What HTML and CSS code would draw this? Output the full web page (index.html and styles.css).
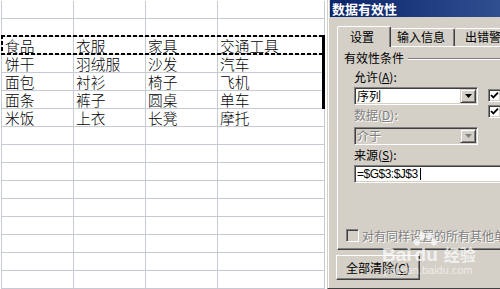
FILE: index.html
```html
<!DOCTYPE html>
<html>
<head>
<meta charset="utf-8">
<link rel="stylesheet" href="styles.css">
</head>
<body>
<div class="screen">
  <div class="sheet">
    <div class="row"><div class="c"></div><div class="c"></div><div class="c"></div><div class="c last"></div></div>
    <div class="row"><div class="c"></div><div class="c"></div><div class="c"></div><div class="c last"></div></div>
    <div class="row"><div class="c first">食品</div><div class="c">衣服</div><div class="c">家具</div><div class="c last">交通工具</div></div>
    <div class="row"><div class="c first">饼干</div><div class="c">羽绒服</div><div class="c">沙发</div><div class="c last">汽车</div></div>
    <div class="row"><div class="c first">面包</div><div class="c">衬衫</div><div class="c">椅子</div><div class="c last">飞机</div></div>
    <div class="row"><div class="c first">面条</div><div class="c">裤子</div><div class="c">圆桌</div><div class="c last">单车</div></div>
    <div class="row"><div class="c first">米饭</div><div class="c">上衣</div><div class="c">长凳</div><div class="c last">摩托</div></div>
    <div class="row"><div class="c"></div><div class="c"></div><div class="c"></div><div class="c last"></div></div>
    <div class="row"><div class="c"></div><div class="c"></div><div class="c"></div><div class="c last"></div></div>
    <div class="row"><div class="c"></div><div class="c"></div><div class="c"></div><div class="c last"></div></div>
    <div class="row"><div class="c"></div><div class="c"></div><div class="c"></div><div class="c last"></div></div>
    <div class="row"><div class="c"></div><div class="c"></div><div class="c"></div><div class="c last"></div></div>
    <div class="row"><div class="c"></div><div class="c"></div><div class="c"></div><div class="c last"></div></div>
    <div class="row"><div class="c"></div><div class="c"></div><div class="c"></div><div class="c last"></div></div>
    <div class="row"><div class="c"></div><div class="c"></div><div class="c"></div><div class="c last"></div></div>
    <div class="row"><div class="c"></div><div class="c"></div><div class="c"></div><div class="c last"></div></div>
    <div class="marquee"></div>
    <div class="selbar"></div>
  </div>

  <div class="dialog">
    <div class="title">数据有效性</div>
    <div class="tabs">
      <div class="tab active">设置</div>
      <div class="tab second">输入信息</div>
      <div class="tab third">出错警告</div>
    </div>
    <div class="page">
      <div class="group"><span>有效性条件</span><i class="etch"></i></div>
      <div class="fields">
        <div class="lbl r1">允许(<u>A</u>):</div>
        <div class="combo r2"><span>序列</span><b class="dd"><svg width="7" height="4" viewBox="0 0 7 4"><path d="M0 0H7L3.5 4Z" fill="#000"/></svg></b></div>
        <div class="chk chk1"><svg width="9" height="9" viewBox="0 0 9 9"><path d="M1 4L3.3 6.4L8 1.6" fill="none" stroke="#000" stroke-width="1.8"/></svg></div>
        <div class="lbl dis r3">数据(<u>D</u>):</div>
        <div class="chk chk2"><svg width="9" height="9" viewBox="0 0 9 9"><path d="M1 4L3.3 6.4L8 1.6" fill="none" stroke="#000" stroke-width="1.8"/></svg></div>
        <div class="combo off r4"><span>介于</span><b class="dd"><svg width="7" height="4" viewBox="0 0 7 4"><path d="M0 0H7L3.5 4Z" fill="#808080"/></svg></b></div>
      </div>
      <div class="lbl src">来源(<u>S</u>):</div>
      <div class="input"><span>=$G$3:$J$3</span><i class="caret"></i></div>
      <div class="apply"><span class="box"></span><span class="dis">对有同样设置的所有其他单元格应用这些更改</span></div>
    </div>
    <div class="foot"><button class="btn">全部清除(<u>C</u>)</button></div>
    <div class="wm">
      <div class="wm-logo"><span class="bai">Bai</span><span class="du"><svg class="paw" width="26" height="20" viewBox="0 0 26 20"><ellipse cx="5" cy="11" rx="3" ry="3.6"/><ellipse cx="10" cy="5" rx="3" ry="3.8"/><ellipse cx="17" cy="5" rx="3" ry="3.8"/><ellipse cx="22" cy="11" rx="3" ry="3.6"/></svg>du</span><span class="jy">经验</span></div>
      <div class="wm-url">jingyan.baidu.com</div>
    </div>
  </div>
</div>
</body>
</html>
```

FILE: styles.css
```css
* { box-sizing: border-box; }
html, body { margin: 0; padding: 0; background: #fff; }
.screen {
  width: 500px;
  height: 289px;
  overflow: hidden;
  display: flex;
  font-family: "Noto Sans CJK SC", sans-serif;
}

/* spreadsheet */
.sheet {
  position: relative;
  width: 327px;
  flex: none;
  padding: 1px 0 0 1px;
  background: #fff;
}
.row { display: flex; height: 18px; }
.c {
  width: 72px;
  height: 18px;
  border-left: 1px solid #c6cad2;
  border-bottom: 1px solid #c6cad2;
  padding-left: 2px;
  font-size: 14.7px;
  font-weight: 300;
  line-height: 17px;
  color: #000;
  white-space: nowrap;
}
.c.first { padding-left: 3px; }
.c.last { width: 108px; border-right: 1px solid #c6cad2; }
.marquee {
  position: absolute;
  left: 1px;
  top: 35px;
  width: 324px;
  height: 20px;
  background:
    repeating-linear-gradient(to right, #000 0 4px, transparent 4px 6px) top left / 100% 2px no-repeat,
    repeating-linear-gradient(to right, #000 0 4px, transparent 4px 6px) bottom left / 100% 2px no-repeat,
    repeating-linear-gradient(to bottom, #000 0 4px, transparent 4px 6px) top left / 2px 100% no-repeat,
    repeating-linear-gradient(to bottom, #000 0 4px, transparent 4px 6px) top right / 2px 100% no-repeat;
}
.selbar {
  position: absolute;
  left: 322px;
  top: 36px;
  width: 3px;
  height: 73px;
  background: #000;
}

/* dialog */
.dialog {
  position: relative;
  flex: 1;
  min-width: 0;
  height: 289px;
  overflow: hidden;
  background: #d4d0c8;
  border-left: 1px solid #d4d0c8;
  box-shadow: inset 1px 0 #ffffff;
  padding-left: 2px;
  border-bottom: 1px solid #404040;
}
.title {
  height: 17px;
  width: 220px;
  background: linear-gradient(to right, #0a246a, #3b5c9c);
  color: #fff;
  font-weight: bold;
  font-size: 13px;
  line-height: 17px;
  padding-left: 2px;
  white-space: nowrap;
}
.tabs {
  display: flex;
  align-items: flex-end;
  height: 20px;
  margin: 9px 0 0 7px;
  width: 240px;
  position: relative;
  z-index: 1;
}
.tab {
  height: 18px;
  border-top: 1px solid #fff;
  border-left: 1px solid #fff;
  border-right: 1px solid #404040;
  box-shadow: inset -1px 0 #808080;
  border-radius: 2px 2px 0 0;
  font-size: 12px;
  line-height: 15px;
  white-space: nowrap;
  color: #000;
}
.tab.active {
  width: 54px;
  height: 21px;
  margin-bottom: -1px;
  padding: 2px 0 0 12px;
  background: #d4d0c8;
}
.tab.second { width: 64px; padding-left: 6px; border-left: none; }
.tab.third { width: 70px; padding-left: 10px; border-left: none; }

.page {
  width: 240px;
  height: 204px;
  margin-left: 7px;
  border-top: 1px solid #fff;
  border-left: 1px solid #fff;
  border-bottom: 1px solid #404040;
  box-shadow: inset 0 -1px #808080;
  padding: 3px 0 7px 6px;
  display: flex;
  flex-direction: column;
  font-size: 12px;
  line-height: 15px;
  color: #000;
}
.group { display: flex; align-items: center; height: 15px; white-space: nowrap; }
.etch {
  flex: 1;
  height: 2px;
  margin-left: 4px;
  margin-top: 2px;
  border-top: 1px solid #808080;
  border-bottom: 1px solid #fff;
}
.fields {
  display: grid;
  grid-template-columns: 124px 13px;
  column-gap: 10px;
  margin-left: 10px;
  margin-top: 4px;
  align-items: start;
}
.lbl { height: 15px; white-space: nowrap; }
.lbl u { text-decoration: underline; }
.r1 { grid-column: 1; grid-row: 1; }
.r2 { grid-column: 1; grid-row: 2; margin-top: 3px; }
.r3 { grid-column: 1; grid-row: 3; margin-top: 2px; }
.r4 { grid-column: 1; grid-row: 4; margin-top: 5px; }
.dis { color: #808080; text-shadow: 1px 1px 0 #fff; }
.combo {
  position: relative;
  height: 18px;
  background: #fff;
  border-top: 1px solid #808080;
  border-left: 1px solid #808080;
  border-right: 1px solid #fff;
  border-bottom: 1px solid #fff;
  box-shadow: inset 1px 1px #404040, inset -1px -1px #d4d0c8;
  padding: 1px 0 0 2px;
  display: flex;
  justify-content: space-between;
  line-height: 14px;
  white-space: nowrap;
}
.combo.off { background: #d4d0c8; }
.combo.off span { color: #808080; text-shadow: 1px 1px 0 #fff; }
.dd {
  width: 16px;
  height: 14px;
  margin-right: 1px;
  background: #d4d0c8;
  border-top: 1px solid #d4d0c8;
  border-left: 1px solid #d4d0c8;
  border-right: 1px solid #404040;
  border-bottom: 1px solid #404040;
  box-shadow: inset 1px 1px #fff, inset -1px -1px #808080;
  display: flex;
  align-items: center;
  justify-content: center;
}
.chk {
  width: 13px;
  height: 13px;
  background: #fff;
  border-top: 1px solid #808080;
  border-left: 1px solid #808080;
  border-right: 1px solid #fff;
  border-bottom: 1px solid #fff;
  box-shadow: inset 1px 1px #404040, inset -1px -1px #d4d0c8;
  display: flex;
  align-items: center;
  justify-content: center;
}
.chk1 { grid-column: 2; grid-row: 2; margin-top: 5px; }
.chk2 { grid-column: 2; grid-row: 3; margin-top: 0px; }
.lbl.src { margin: 2px 0 0 10px; }
.input {
  margin: 3px 0 0 10px;
  width: 200px;
  height: 18px;
  background: #fff;
  border-top: 1px solid #808080;
  border-left: 1px solid #808080;
  border-right: 1px solid #fff;
  border-bottom: 1px solid #fff;
  box-shadow: inset 1px 1px #404040, inset -1px -1px #d4d0c8;
  padding: 0 0 0 2px;
  display: flex;
  align-items: center;
  font-family: "Liberation Sans", sans-serif;
  font-size: 12px;
  letter-spacing: -0.5px;
  line-height: 16px;
}
.caret { width: 1px; height: 12px; background: #000; margin-left: 2px; }
.apply {
  margin-top: auto;
  margin-left: 2px;
  display: flex;
  align-items: center;
  height: 14px;
  white-space: nowrap;
}
.apply .box {
  width: 13px;
  height: 13px;
  flex: none;
  margin-right: 3px;
  background: #d4d0c8;
  border-top: 1px solid #808080;
  border-left: 1px solid #808080;
  border-right: 1px solid #fff;
  border-bottom: 1px solid #fff;
  box-shadow: inset 1px 1px #404040, inset -1px -1px #d4d0c8;
}
.foot { margin: 4px 0 0 6px; }
.btn {
  width: 84px;
  height: 25px;
  padding: 0;
  background: #d4d0c8;
  border-top: 1px solid #fff;
  border-left: 1px solid #fff;
  border-right: 1px solid #404040;
  border-bottom: 1px solid #404040;
  box-shadow: inset -1px -1px #808080;
  font-family: "Noto Sans CJK SC", sans-serif;
  font-size: 12px;
  line-height: 15px;
  color: #000;
  white-space: nowrap;
}

/* watermark overlay */
.wm {
  position: absolute;
  left: 54px;
  top: 232px;
  color: rgba(255, 255, 255, 0.72);
}
.wm-logo { display: flex; align-items: flex-end; height: 32px; }
.bai, .du {
  font-family: "Liberation Sans", sans-serif;
  font-weight: bold;
  font-size: 19px;
  line-height: 19px;
}
.du { position: relative; padding: 0 3px; }
.paw { position: absolute; left: 0; top: -14px; fill: rgba(255, 255, 255, 0.72); }
.jy { font-size: 16px; line-height: 19px; margin-left: 3px; font-weight: bold; }
.wm-url {
  font-family: "Liberation Sans", sans-serif;
  font-size: 11px;
  line-height: 12px;
  margin-left: 2px;
  color: rgba(255, 255, 255, 0.6);
}
```
